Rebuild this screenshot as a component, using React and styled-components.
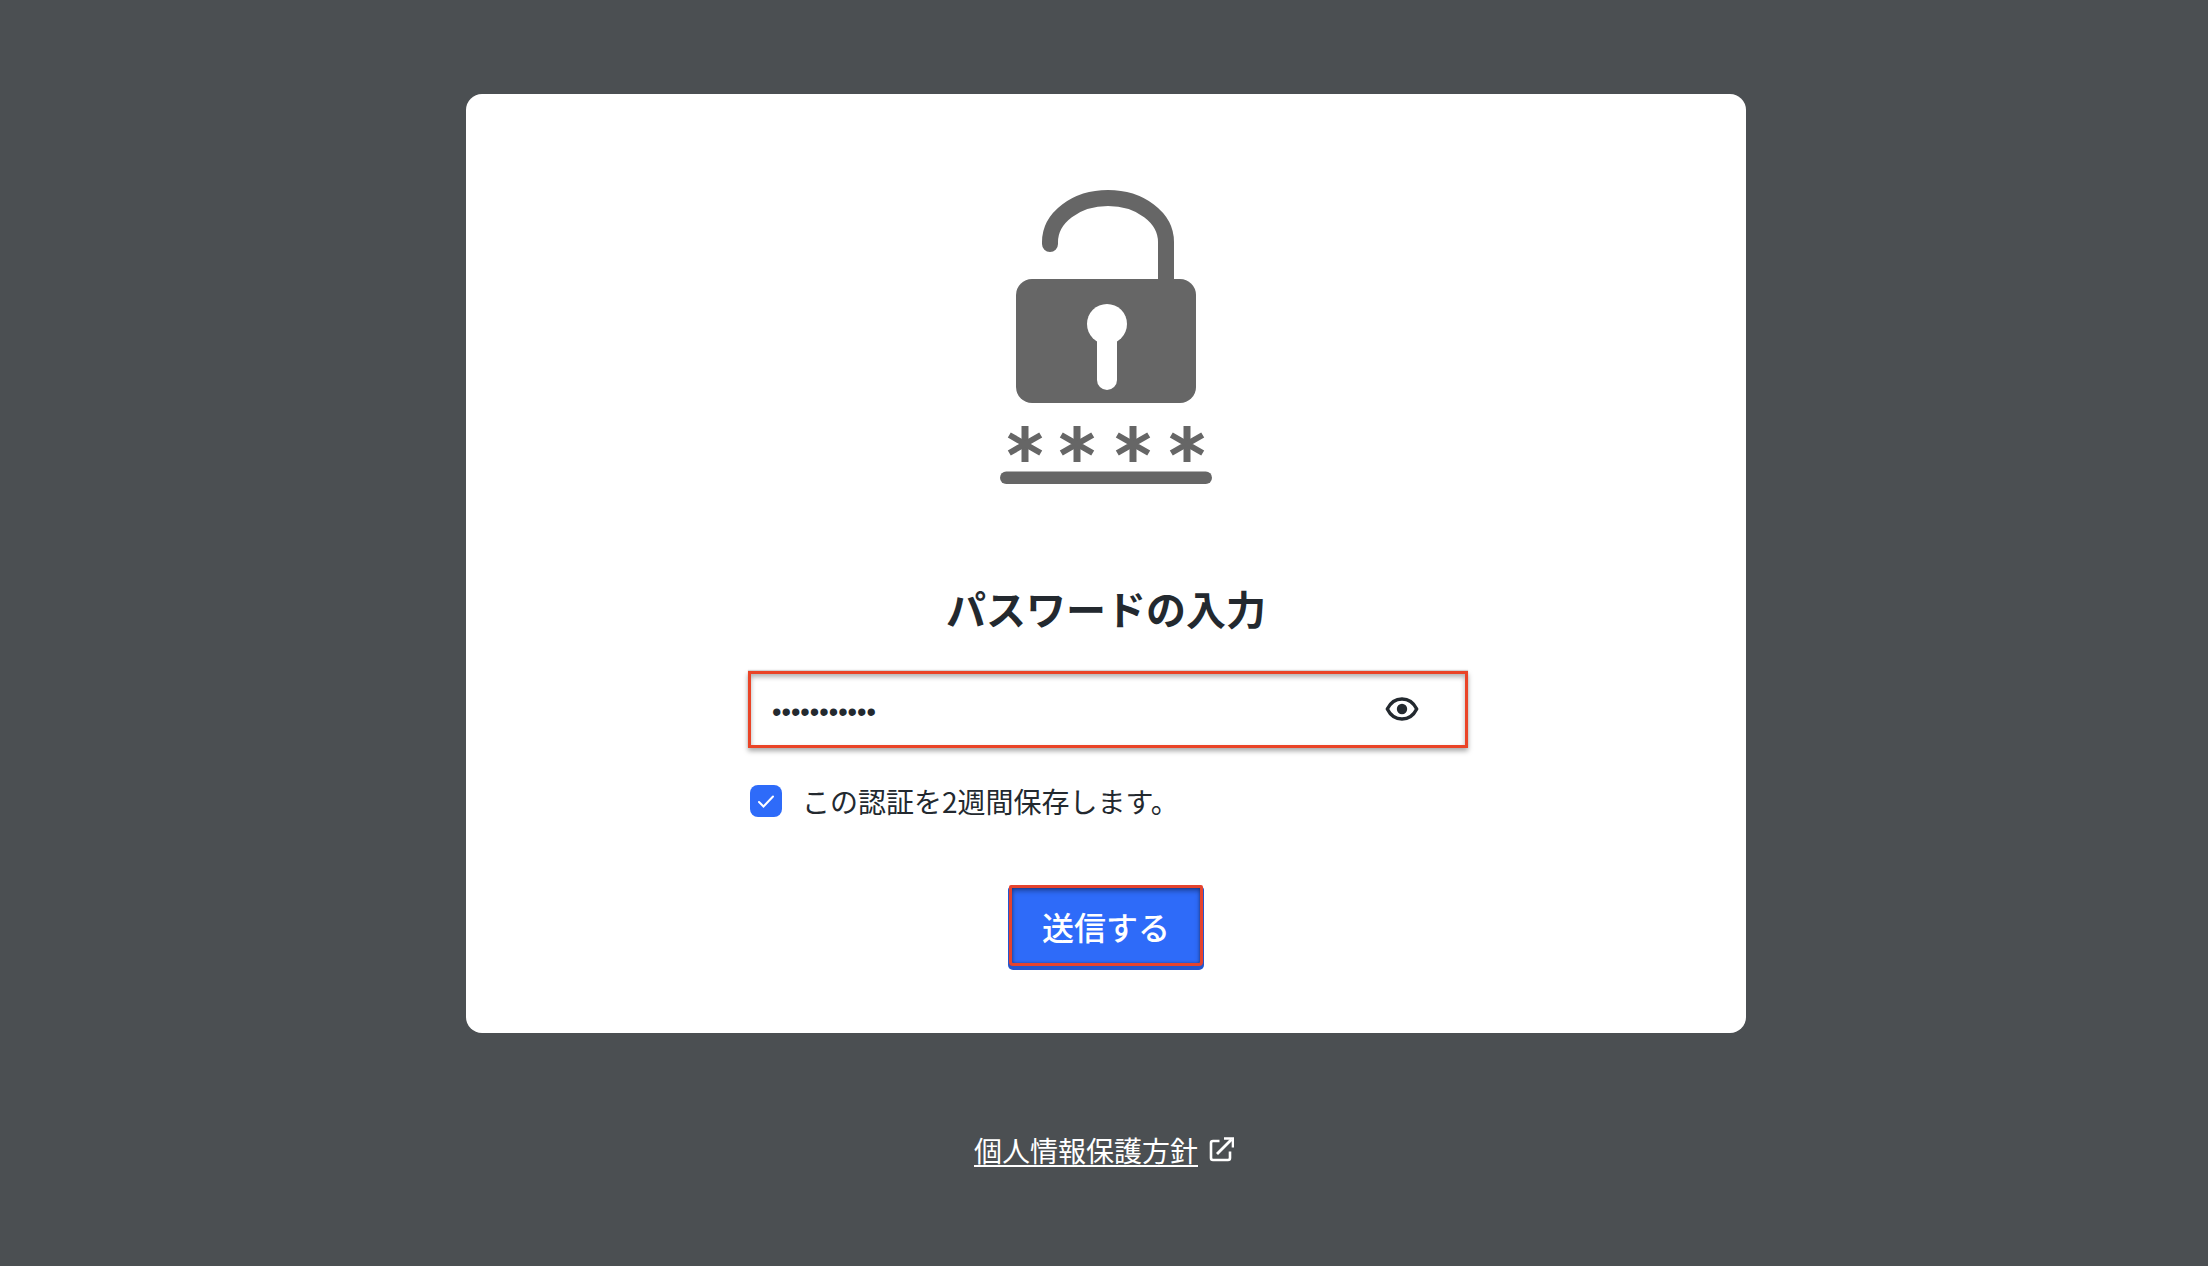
import React, { useState } from "react";
import styled, { createGlobalStyle } from "styled-components";

const GlobalStyle = createGlobalStyle`
  *, *::before, *::after { box-sizing: border-box; }
  body {
    margin: 0;
    background: #4b4f52;
    color: #23292f;
    font-family: "Noto Sans CJK JP", sans-serif;
    font-size: 28px;
    line-height: 42px;
  }
`;

const Page = styled.div`
  min-height: 100vh;
  padding: 94px 24px 80px 28px;
  display: flex;
  flex-direction: column;
  align-items: center;
  gap: 96px;
`;

const Card = styled.main`
  width: 100%;
  max-width: 1280px;
  padding: 96px 48px 67px;
  background: #fff;
  border-radius: 16px;
  display: flex;
  flex-direction: column;
  align-items: center;
`;

const Title = styled.h1`
  margin: 96px 0 35px;
  font-size: 40px;
  line-height: 56px;
  font-weight: 700;
`;

const Form = styled.form`
  width: 100%;
  max-width: 724px;
  display: flex;
  flex-direction: column;
  align-items: center;
  gap: 63px;
`;

const Fields = styled.div`
  width: 100%;
  padding-left: 4px;
  display: flex;
  flex-direction: column;
  gap: 32px;
`;

const PasswordBox = styled.div`
  display: flex;
  align-items: center;
  height: 77px;
  padding: 0 46px 0 21px;
  border: 3px solid #ea4427;
  background: #fff;
  box-shadow: 0 3px 5px rgba(0, 0, 0, 0.35), 0 -1px 1px rgba(0, 0, 0, 0.15),
    inset 0 3px 5px rgba(0, 0, 0, 0.3);
`;

const PasswordInput = styled.input`
  flex: 1;
  min-width: 0;
  height: 100%;
  padding: 6px 0 0;
  border: 0;
  outline: 0;
  background: transparent;
  color: inherit;
  font-family: "Liberation Sans", sans-serif;
  font-size: 27px;
`;

const IconButton = styled.button`
  display: flex;
  padding: 0 0 2px;
  border: 0;
  background: transparent;
  color: inherit;
  cursor: pointer;
`;

const Remember = styled.label`
  display: flex;
  align-items: center;
  gap: 20px;
  padding: 0 2px;
`;

const CheckMark = styled.span`
  display: grid;
  width: 32px;
  height: 32px;
  & > * { grid-area: 1 / 1; }
`;

const CheckInput = styled.input`
  appearance: none;
  width: 32px;
  height: 32px;
  margin: 0;
  border-radius: 8px;
  background: #2e6bf9;
  &:not(:checked) { background: #fff; border: 2px solid #8a9099; }
`;

const SubmitButton = styled.button`
  height: 81px;
  padding: 0 30px;
  border: 3px solid #e5432e;
  border-radius: 2px 2px 4px 4px;
  background: #2e6bf9;
  box-shadow: inset 0 3px 5px rgba(0, 0, 0, 0.35), inset 0 0 3px rgba(0, 0, 0, 0.3),
    0 3px 0 1px #2356cf;
  color: #fff;
  font-family: inherit;
  font-size: 32px;
  line-height: 48px;
  font-weight: 500;
  cursor: pointer;
`;

const Footer = styled.footer`
  display: flex;
  padding-right: 4px;
`;

const PolicyLink = styled.a`
  display: flex;
  align-items: center;
  gap: 10px;
  color: #fff;
  text-decoration: none;
`;

const PolicyText = styled.span`
  text-decoration: underline;
  text-decoration-thickness: 2px;
  text-underline-offset: 3px;
  text-decoration-skip-ink: none;
`;

function LockIcon() {
  return (
    <svg width="212" height="294" viewBox="0 0 212 294" fill="none" aria-hidden="true">
      <path
        d="M50 54V52C50 27.500 76 8 108 8S166 27.500 166 52V94"
        stroke="#666"
        strokeWidth="16"
        strokeLinecap="round"
      />
      <rect x="16" y="89" width="180" height="124" rx="16" fill="#666" />
      <circle cx="107" cy="134" r="20" fill="#fff" />
      <rect x="97" y="138" width="20" height="62" rx="10" fill="#fff" />
      {[25, 77, 133, 187].map((x) => (
        <g key={x} transform={`translate(${x} 254)`} stroke="#666">
          <path d="M0-18V18" strokeWidth="7" />
          <path d="M-15.700-9L15.700 9M-15.700 9L15.700-9" strokeWidth="6" />
        </g>
      ))}
      <rect x="0" y="281.500" width="212" height="12.500" rx="6.250" fill="#666" />
    </svg>
  );
}

function EyeIcon() {
  return (
    <svg width="34" height="26" viewBox="0 0 34 26" fill="none" aria-hidden="true">
      <path
        d="M2.300 13C5.500 6.500 10.500 3 17 3S28.500 6.500 31.700 13C28.500 19.500 23.500 23 17 23S5.500 19.500 2.300 13Z"
        stroke="currentColor"
        strokeWidth="3.400"
        strokeLinejoin="round"
      />
      <circle cx="17" cy="13" r="5.200" fill="currentColor" />
    </svg>
  );
}

function CheckIcon() {
  return (
    <svg width="32" height="32" viewBox="0 0 32 32" fill="none" aria-hidden="true" pointerEvents="none">
      <path d="M9 17L13.500 21.500L23 11.500" stroke="#fff" strokeWidth="2" strokeLinecap="round" />
    </svg>
  );
}

function ExternalIcon() {
  return (
    <svg width="26" height="26" viewBox="0 0 26 26" fill="none" stroke="currentColor" aria-hidden="true">
      <path d="M11.500 4H5Q3 4 3 6V21Q3 23 5 23H20Q22 23 22 21V14.500" strokeWidth="2.600" />
      <path d="M9 17L23.500 2.500" strokeWidth="2.800" />
      <path d="M16 1.500H25V10.500" strokeWidth="2.600" />
    </svg>
  );
}

export default function App() {
  const [password, setPassword] = useState("password123");
  const [visible, setVisible] = useState(false);
  const [remember, setRemember] = useState(true);

  return (
    <>
      <GlobalStyle />
      <Page>
        <Card>
          <LockIcon />
          <Title>パスワードの入力</Title>
          <Form onSubmit={(e) => e.preventDefault()}>
            <Fields>
              <PasswordBox>
                <PasswordInput
                  type={visible ? "text" : "password"}
                  aria-label="パスワード"
                  value={password}
                  onChange={(e) => setPassword(e.target.value)}
                />
                <IconButton type="button" aria-label="パスワードを表示" onClick={() => setVisible(!visible)}>
                  <EyeIcon />
                </IconButton>
              </PasswordBox>
              <Remember>
                <CheckMark>
                  <CheckInput
                    type="checkbox"
                    checked={remember}
                    onChange={(e) => setRemember(e.target.checked)}
                  />
                  <CheckIcon />
                </CheckMark>
                この認証を2週間保存します。
              </Remember>
            </Fields>
            <SubmitButton type="submit">送信する</SubmitButton>
          </Form>
        </Card>
        <Footer>
          <PolicyLink href="#privacy">
            <PolicyText>個人情報保護方針</PolicyText>
            <ExternalIcon />
          </PolicyLink>
        </Footer>
      </Page>
    </>
  );
}
